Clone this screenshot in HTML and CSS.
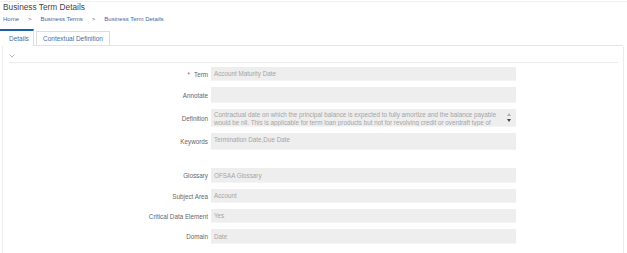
FILE: index.html
```html
<html lang="en">
<head>
  <meta charset="UTF-8" />
  <title>Business Term Details</title>
  <link rel="stylesheet" href="styles.css">
</head>
<body>

<div class="page">
  <!-- En-tête -->
  <div class="title">Business Term Details</div>
  <div class="crumbs">
    <span class="crumb">Home</span><span class="sep">&gt;</span>
    <span class="crumb">Business Terms</span><span class="sep">&gt;</span>
    <span class="crumb">Business Term Details</span>
  </div>

  <!-- Onglets -->
  <div class="tabs">
    <div class="tab active">Details</div>
    <div class="tab">Contextual Definition</div>
  </div>

  <!-- Panneau -->
  <div class="panel">
    <div class="toggle">
      <svg width="6" height="4" viewBox="0 0 6 4"><polyline points="0.5,0.5 3,3 5.5,0.5" fill="none" stroke="#a0a0a0" stroke-width="0.8"/></svg>
    </div>

    <div class="form">
      <div class="row">
        <div class="label"><span class="req">*</span>Term</div>
        <div class="field h14">Account Maturity Date</div>
      </div>
      <div class="row">
        <div class="label">Annotate</div>
        <div class="field h16"></div>
      </div>
      <div class="row">
        <div class="label">Definition</div>
        <div class="field multi h18">
          <div class="multi-text">Contractual date on which the principal balance is expected to fully amortize and the balance payable<br>would be nil. This is applicable for term loan products but not for revolving credit or overdraft type of</div>
          <div class="arrows"><span class="up"></span><span class="down"></span></div>
        </div>
      </div>
      <div class="row big-gap">
        <div class="label">Keywords</div>
        <div class="field top h17">Termination Date,Due Date</div>
      </div>
      <div class="row">
        <div class="label">Glossary</div>
        <div class="field h15">OFSAA Glossary</div>
      </div>
      <div class="row">
        <div class="label">Subject Area</div>
        <div class="field h14">Account</div>
      </div>
      <div class="row">
        <div class="label">Critical Data Element</div>
        <div class="field h14">Yes</div>
      </div>
      <div class="row">
        <div class="label">Domain</div>
        <div class="field h15">Date</div>
      </div>
    </div>
  </div>
</div>

</body>
</html>
```

FILE: styles.css
```css
/* Base */
body {
  margin: 0;
  padding-top: 1px;
  height: 253px;
  overflow: hidden;
  background: #fff;
  font-family: 'Liberation Sans', Arial, sans-serif;
  color: #333;
}
.page {
  border-top: 1px solid #f0f0f0;
}
.title {
  font-size: 8.3px;
  line-height: 11px;
  padding-left: 3px;
  color: #444;
}
.crumbs {
  margin-top: 2px;
  padding-left: 3px;
  font-size: 6px;
  line-height: 8px;
  display: flex;
}
.crumb {
  color: #3a6aa6;
}
.sep {
  color: #666;
  margin: 0 9px;
}

/* Onglets */
.tabs {
  margin-top: 6px;
  width: 623px;
  height: 16px;
  display: flex;
  align-items: flex-end;
  border-bottom: 1px solid #e4e4e4;
}
.tab {
  box-sizing: border-box;
  height: 14px;
  margin-left: 2px;
  padding: 0 6px;
  border: 1px solid #ddd;
  border-bottom: none;
  font-size: 6.5px;
  color: #4a6e9a;
  display: flex;
  align-items: center;
}
.tab.active {
  width: 34px;
  height: 17px;
  margin: 0 0 -1px 0;
  padding: 0 0 0 9px;
  border: none;
  border-top: 2px solid #1f5ea8;
  border-right: 1px solid #ddd;
  background: #fff;
}

/* Panneau */
.panel {
  box-sizing: border-box;
  width: 622px;
  height: 207px;
  margin-left: 2px;
  border-left: 1px solid #ececec;
  border-right: 1px solid #ececec;
}
.toggle {
  box-sizing: border-box;
  height: 17px;
  margin: 0 5px 0 6px;
  padding-bottom: 4px;
  border-bottom: 1px solid #ebebeb;
  display: flex;
  align-items: flex-end;
}
.form {
  padding-top: 4px;
}
.row {
  display: flex;
  align-items: center;
  margin-bottom: 6px;
}
.row.big-gap {
  margin-bottom: 18px;
}
.label {
  width: 205px;
  margin-right: 3px;
  text-align: right;
  font-size: 6.3px;
  color: #666;
}
.req {
  color: #e03c3c;
  margin-right: 4px;
}
.field {
  box-sizing: border-box;
  width: 305px;
  padding: 0 3px;
  background: #eee;
  border-bottom: 1px solid #f4f4f4;
  font-size: 6.3px;
  color: #a5a5a5;
  display: flex;
  align-items: center;
}
.field.top {
  align-items: flex-start;
  padding-top: 3px;
}
.field.multi {
  align-items: flex-start;
  overflow: hidden;
  padding-top: 2px;
}
.multi-text {
  flex: 1;
  white-space: nowrap;
  line-height: 7.5px;
}
.arrows {
  width: 8px;
  display: flex;
  flex-direction: column;
  align-items: center;
  gap: 3px;
  padding-top: 2px;
}
.up {
  width: 0;
  height: 0;
  border-left: 2px solid transparent;
  border-right: 2px solid transparent;
  border-bottom: 3px solid #b0b0b0;
}
.down {
  width: 0;
  height: 0;
  border-left: 2px solid transparent;
  border-right: 2px solid transparent;
  border-top: 3px solid #444;
}
.h14 { height: 14px; }
.h15 { height: 15px; }
.h16 { height: 16px; }
.h17 { height: 17px; }
.h18 { height: 18px; }
```
